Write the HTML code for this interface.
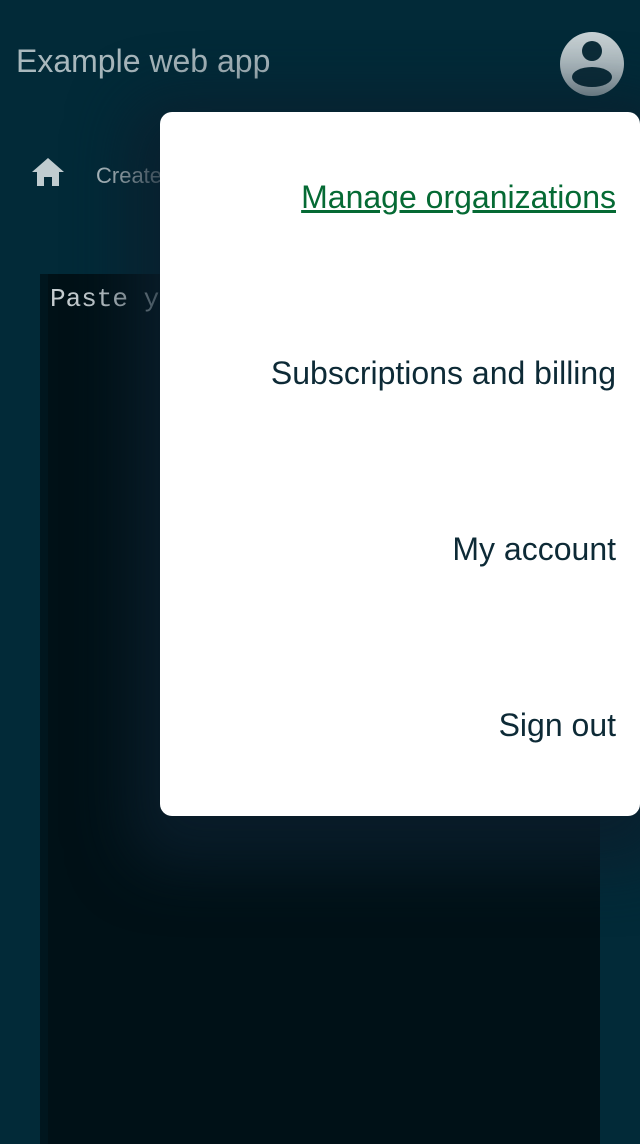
<!DOCTYPE html>
<html><head><style>
body{margin:0;width:640px;height:1136px;overflow:hidden;background:#022a38;font-family:"Liberation Sans",sans-serif;position:relative}
.title{position:absolute;left:16px;top:43px;font-size:32px;color:#a9b8bd}
.av{position:absolute;left:560px;top:32px;width:64px;height:64px;border-radius:50%;background:linear-gradient(#c8d2d5,#9aa8ae);overflow:hidden}
.home{position:absolute;left:31px;top:157px}
.create{position:absolute;left:96px;top:163px;font-size:22px;color:#b9c6ca}
.ta{position:absolute;left:40px;top:274px;width:560px;height:870px;background:#001117;border-left:8px solid #00161e;box-sizing:border-box}
.ta span{position:absolute;left:2px;top:10px;font-family:"Liberation Mono",monospace;font-size:26px;color:#c5cdd0}
.menu{position:absolute;left:160px;top:112px;width:480px;height:704px;background:#fff;border-radius:12px;box-shadow:0 20px 60px 30px rgba(10,30,45,.85)}
.menu div{position:absolute;right:24px;font-size:32px;color:#0d2a36}
</style></head><body>
<div class="title">Example web app</div>
<div class="av"><svg width="64" height="64" viewBox="0 0 64 64"><circle cx="32" cy="19" r="10" fill="#0c2c38"/><ellipse cx="32" cy="45" rx="20" ry="10" fill="#0c2c38"/></svg></div>
<svg class="home" width="34" height="30" viewBox="0 0 34 30"><path d="M17 1 L1 15 H6 V29 H13 V20 H21 V29 H28 V15 H33 Z" fill="#c0ccd0"/></svg>
<div class="create">Create</div>
<div class="ta"><span>Paste y</span></div>
<div class="menu">
<div style="top:67px;color:#056a34;text-decoration:underline">Manage organizations</div>
<div style="top:243px">Subscriptions and billing</div>
<div style="top:419px">My account</div>
<div style="top:595px">Sign out</div>
</div>
</body></html>
